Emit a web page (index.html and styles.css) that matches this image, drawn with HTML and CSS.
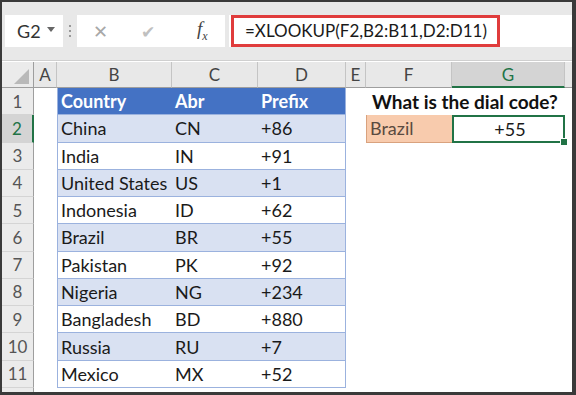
FILE: index.html
```html
<!DOCTYPE html>
<html>
<head>
    <title>XLOOKUP dial code</title>
    <link rel="stylesheet" href="styles.css">
</head>
<body>
    <div class="frame">
        <div class="toolbar">
            <div class="namebox">G2 <span class="arrow"></span></div>
            <div class="grip"><span></span><span></span><span></span></div>
            <div class="funcbox">
                <span class="cancel">&#x2715;</span>
                <span class="enter">&#x2714;</span>
                <span class="fx">f<sub>x</sub></span>
            </div>
            <div class="formula"><span class="mark">=XLOOKUP(F2,B2:B11,D2:D11)</span></div>
        </div>

        <div class="sheet">
            <div class="row head">
                <div class="rh corner"><span class="tri"></span></div>
                <div class="ch">A</div><div class="ch">B</div><div class="ch">C</div><div class="ch">D</div>
                <div class="ch">E</div><div class="ch">F</div><div class="ch sel">G</div><div class="ch last"></div>
            </div>
            <div class="row">
                <div class="rh">1</div><div class="c"></div>
                <div class="c t th first">Country</div><div class="c t th">Abr</div><div class="c t th end">Prefix</div>
                <div class="c"></div><div class="c q">What is the dial code?</div><div class="c"></div><div class="c"></div>
            </div>
            <div class="row">
                <div class="rh sel">2</div><div class="c"></div>
                <div class="c t band first">China</div><div class="c t band">CN</div><div class="c t band end">+86</div>
                <div class="c"></div><div class="c pick">Brazil</div><div class="c result">+55</div><div class="c"></div>
            </div>
            <div class="row">
                <div class="rh">3</div><div class="c"></div>
                <div class="c t first">India</div><div class="c t">IN</div><div class="c t end">+91</div>
                <div class="c"></div><div class="c"></div><div class="c"></div><div class="c"></div>
            </div>
            <div class="row">
                <div class="rh">4</div><div class="c"></div>
                <div class="c t band first">United States</div><div class="c t band">US</div><div class="c t band end">+1</div>
                <div class="c"></div><div class="c"></div><div class="c"></div><div class="c"></div>
            </div>
            <div class="row">
                <div class="rh">5</div><div class="c"></div>
                <div class="c t first">Indonesia</div><div class="c t">ID</div><div class="c t end">+62</div>
                <div class="c"></div><div class="c"></div><div class="c"></div><div class="c"></div>
            </div>
            <div class="row">
                <div class="rh">6</div><div class="c"></div>
                <div class="c t band first">Brazil</div><div class="c t band">BR</div><div class="c t band end">+55</div>
                <div class="c"></div><div class="c"></div><div class="c"></div><div class="c"></div>
            </div>
            <div class="row">
                <div class="rh">7</div><div class="c"></div>
                <div class="c t first">Pakistan</div><div class="c t">PK</div><div class="c t end">+92</div>
                <div class="c"></div><div class="c"></div><div class="c"></div><div class="c"></div>
            </div>
            <div class="row">
                <div class="rh">8</div><div class="c"></div>
                <div class="c t band first">Nigeria</div><div class="c t band">NG</div><div class="c t band end">+234</div>
                <div class="c"></div><div class="c"></div><div class="c"></div><div class="c"></div>
            </div>
            <div class="row">
                <div class="rh">9</div><div class="c"></div>
                <div class="c t first">Bangladesh</div><div class="c t">BD</div><div class="c t end">+880</div>
                <div class="c"></div><div class="c"></div><div class="c"></div><div class="c"></div>
            </div>
            <div class="row">
                <div class="rh">10</div><div class="c"></div>
                <div class="c t band first">Russia</div><div class="c t band">RU</div><div class="c t band end">+7</div>
                <div class="c"></div><div class="c"></div><div class="c"></div><div class="c"></div>
            </div>
            <div class="row">
                <div class="rh">11</div><div class="c"></div>
                <div class="c t first">Mexico</div><div class="c t">MX</div><div class="c t end">+52</div>
                <div class="c"></div><div class="c"></div><div class="c"></div><div class="c"></div>
            </div>
            <div class="row tail">
                <div class="rh"></div><div class="c"></div>
            </div>
        </div>
    </div>
</body>
</html>
```

FILE: styles.css
```css
body {
    margin: 0;
    font-family: Lato, "Open Sans", sans-serif;
    background: #fff;
}

.frame {
    width: 576px;
    height: 395px;
    box-sizing: border-box;
    border-style: solid;
    border-color: #3a3a3a;
    border-width: 2px 4px 3px 2px;
    overflow: hidden;
    background: #fff;
}

/* formula bar */
.toolbar {
    height: 59px;
    background: #e8e8e8;
    border-bottom: 1px solid #cfcfcf;
    display: flex;
    align-items: flex-start;
    padding-top: 13px;
    box-sizing: border-box;
}

.namebox {
    margin-left: 3px;
    width: 58px;
    height: 32px;
    background: #fff;
    box-sizing: border-box;
    display: flex;
    align-items: center;
    padding-left: 12px;
    font-size: 18px;
    color: #333;
    gap: 6px;
}

.arrow {
    width: 0;
    height: 0;
    border-left: 4px solid transparent;
    border-right: 4px solid transparent;
    border-top: 5px solid #666;
    margin-top: -4px;
}

.grip {
    width: 14px;
    height: 32px;
    display: flex;
    flex-direction: column;
    align-items: center;
    justify-content: center;
    gap: 3px;
}

.grip span {
    width: 2px;
    height: 2px;
    background: #999;
}

.funcbox {
    width: 148px;
    height: 32px;
    background: #fff;
    display: flex;
    align-items: center;
    box-sizing: border-box;
    padding-left: 16px;
    color: #a8a8a8;
}

.cancel {
    font-size: 18px;
    width: 48px;
}

.enter {
    font-size: 17px;
    width: 56px;
    color: #c0c0c0;
}

.fx {
    font-family: "Liberation Serif", serif;
    font-style: italic;
    font-size: 19px;
    color: #444;
}

.fx sub {
    font-size: 12px;
}

.formula {
    margin-left: 4px;
    flex: 1;
    height: 32px;
    background: #fff;
    display: flex;
}

.mark {
    box-sizing: border-box;
    margin-left: 2px;
    width: 269px;
    height: 32px;
    border: 3px solid #e03c3c;
    padding-left: 11px;
    font-size: 17px;
    line-height: 26px;
    color: #1a1a1a;
    white-space: nowrap;
}

/* sheet grid */
.sheet {
    padding-top: 1px;
}

.row {
    display: grid;
    grid-template-columns: 32px 23px 115px 86px 88px 20px 86px 113px 1fr;
    height: 27.27px;
    font-size: 18px;
}

.row.head {
    height: 26px;
    background: #e8e8e8;
}

.rh {
    background: #ebebeb;
    color: #555;
    font-size: 17px;
    display: flex;
    align-items: center;
    justify-content: center;
    border-right: 1px solid #9e9e9e;
    border-bottom: 1px solid #d4d4d4;
    box-sizing: border-box;
}

.rh.sel {
    background: #d4d4d4;
    color: #217346;
    border-right: 2px solid #217346;
}

.corner {
    border-bottom: 1px solid #9e9e9e;
    position: relative;
}

.tri {
    position: absolute;
    right: 4px;
    bottom: 3px;
    width: 0;
    height: 0;
    border-left: 15px solid transparent;
    border-bottom: 15px solid #b9b9b9;
}

.ch {
    display: flex;
    align-items: center;
    justify-content: center;
    color: #444;
    font-size: 17px;
    border-right: 1px solid #c4c4c4;
    border-bottom: 1px solid #9e9e9e;
    box-sizing: border-box;
}

.ch.sel {
    background: #d4d4d4;
    color: #217346;
    border-bottom: 2px solid #217346;
}

.ch.last {
    border-right: none;
}

.c {
    display: flex;
    align-items: center;
    padding-left: 3px;
    box-sizing: border-box;
    white-space: nowrap;
    color: #1a1a1a;
}

.t {
    border-bottom: 1px solid #9bb2de;
}

.t.first {
    border-left: 1px solid #9bb2de;
}

.t.end {
    border-right: 1px solid #9bb2de;
}

.th {
    background: #4472c4;
    color: #fff;
    font-weight: bold;
}

.band {
    background: #d9e1f2;
}

.q {
    font-weight: bold;
    font-size: 19px;
    color: #111;
    padding-left: 6px;
    overflow: visible;
}

.pick {
    background: #f8cbad;
    color: #5a4a40;
    border-bottom: 1px solid #d9a27e;
    border-left: 1px solid #d9a27e;
}

.result {
    border: 2px solid #217346;
    justify-content: center;
    position: relative;
}

.result::after {
    content: "";
    position: absolute;
    right: -5px;
    bottom: -5px;
    width: 6px;
    height: 6px;
    background: #217346;
    border: 1px solid #fff;
}

.row.tail {
    height: 10px;
}
```
